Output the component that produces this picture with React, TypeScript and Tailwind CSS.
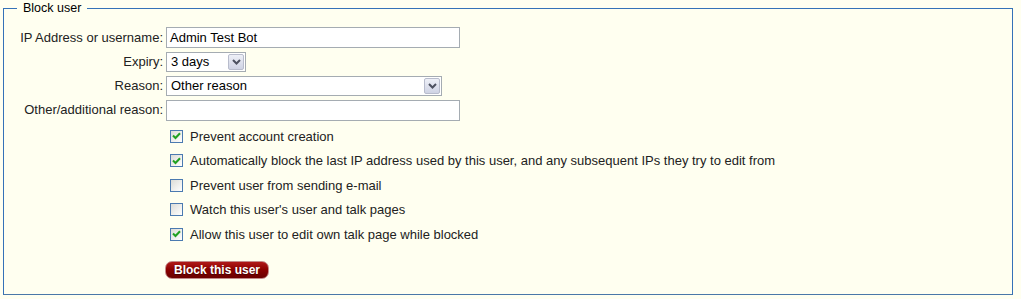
import React from "react";

function Chevron() {
  return (
    <svg width="9" height="6" viewBox="0 0 9 6" className="block">
      <path d="M1 1 L4.5 4.5 L8 1" fill="none" stroke="#4d5160" strokeWidth="2" />
    </svg>
  );
}

function FakeSelect({ width, value }: { width: number; value: string }) {
  return (
    <div
      className="relative h-[20px] border border-[#a5acb2] bg-white flex items-center pl-[4px] text-[13px] text-black"
      style={{ width }}
    >
      <span>{value}</span>
      <div className="absolute right-[1px] top-[1px] bottom-[1px] w-[16px] rounded-[2px] border border-[#b8bccc] bg-gradient-to-b from-[#eef0f7] to-[#cfd3e4] flex items-center justify-center">
        <Chevron />
      </div>
    </div>
  );
}

function Checkbox({ checked }: { checked: boolean }) {
  return (
    <div className="w-[13px] h-[13px] border border-[#4b7ab0] bg-gradient-to-br from-[#dcdcd7] to-white flex items-center justify-center shrink-0">
      {checked && (
        <svg width="9" height="8" viewBox="0 0 9 8" className="block">
          <path d="M1 3.5 L3.5 6 L8 1.2" fill="none" stroke="#21a121" strokeWidth="2" />
        </svg>
      )}
    </div>
  );
}

export default function App() {
  const checks: [boolean, string][] = [
    [true, "Prevent account creation"],
    [true, "Automatically block the last IP address used by this user, and any subsequent IPs they try to edit from"],
    [false, "Prevent user from sending e-mail"],
    [false, "Watch this user's user and talk pages"],
    [true, "Allow this user to edit own talk page while blocked"],
  ];
  return (
    <div className="min-h-[299px] w-[1021px] bg-[#fffff0] pt-[1px] pl-[3px] pr-[8px] font-['Liberation_Sans',Arial,sans-serif] text-[13px] text-[#222]">
      <fieldset className="border border-[#3572b8] border-b-[#4a78a8] m-0 p-0 min-w-0">
        <legend className="ml-[13px] px-[6px] leading-[14px] text-[12.5px] text-black">Block user</legend>
        <div className="pt-[10px] pb-[15px]">
          <div className="flex items-center h-[25px]">
            <div className="w-[159px] text-right whitespace-nowrap">IP Address or username:</div>
            <div className="ml-[3px]">
              <div className="w-[294px] h-[21px] border border-[#a5acb2] bg-white flex items-center pl-[3px] text-black">Admin Test Bot</div>
            </div>
          </div>
          <div className="flex items-center h-[24px]">
            <div className="w-[159px] text-right">Expiry:</div>
            <div className="ml-[3px]">
              <FakeSelect width={80} value="3 days" />
            </div>
          </div>
          <div className="flex items-center h-[24px]">
            <div className="w-[159px] text-right">Reason:</div>
            <div className="ml-[3px]">
              <FakeSelect width={276} value="Other reason" />
            </div>
          </div>
          <div className="flex items-center h-[24px]">
            <div className="w-[159px] text-right whitespace-nowrap">Other/additional reason:</div>
            <div className="ml-[3px]">
              <div className="w-[294px] h-[21px] border border-[#a5acb2] bg-white" />
            </div>
          </div>
          <div className="mt-[2px] pl-[166px]">
            {checks.map(([c, t], i) => (
              <div key={i} className="flex items-center h-[24.5px]">
                <Checkbox checked={c} />
                <span className="ml-[7px] text-[#222] whitespace-nowrap">{t}</span>
              </div>
            ))}
          </div>
          <div className="mt-[13px] pl-[161px]">
            <button className="h-[18px] px-[8px] rounded-[7px] border border-[#c48a8a] bg-gradient-to-b from-[#b01818] via-[#8a0000] to-[#6a0000] text-white font-bold text-[12px] leading-[14px] [text-shadow:0_1px_1px_#400]">
              Block this user
            </button>
          </div>
        </div>
      </fieldset>
    </div>
  );
}
